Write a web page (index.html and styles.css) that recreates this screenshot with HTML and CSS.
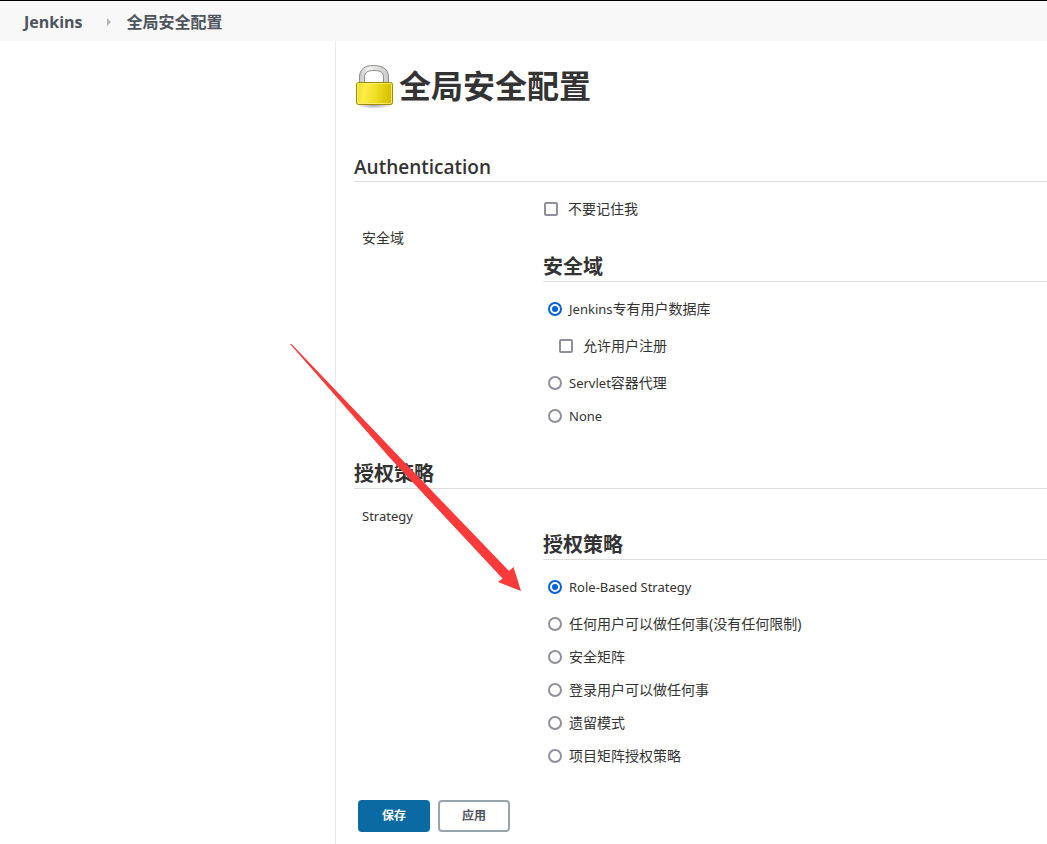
FILE: index.html
```html
<!DOCTYPE html>
<html lang="zh-CN">
<head>
<meta charset="utf-8">
<title>全局安全配置 [Jenkins]</title>
<link rel="stylesheet" href="styles.css">
</head>
<body>
<nav class="breadcrumbs">
  <a href="#">Jenkins</a>
  <svg class="separator" viewBox="0 0 4 8" aria-hidden="true"><path d="M0 0L4 4L0 8Z"/></svg>
  <a href="#">全局安全配置</a>
</nav>
<div class="page">
  <aside class="side-panel"></aside>
  <main class="main-panel">
    <h1 class="page-title">
      <svg class="lock" viewBox="0 0 42 46" aria-hidden="true">
        <defs>
          <linearGradient id="gold" x1="0" y1="0" x2="1" y2="0.1">
            <stop offset="0" stop-color="#eedb20"/><stop offset="0.25" stop-color="#fdec48"/><stop offset="0.6" stop-color="#f0dc20"/><stop offset="1" stop-color="#d6be00"/>
          </linearGradient>
          <linearGradient id="steel" x1="0" y1="0" x2="1" y2="0">
            <stop offset="0" stop-color="#c4c6c2"/><stop offset="0.3" stop-color="#f2f2f0"/><stop offset="1" stop-color="#c9cac7"/>
          </linearGradient>
          <radialGradient id="shade"><stop offset="0" stop-color="#777" stop-opacity="0.7"/><stop offset="1" stop-color="#777" stop-opacity="0"/></radialGradient>
        </defs>
        <ellipse cx="20" cy="42" rx="18" ry="4" fill="url(#shade)"/>
        <path d="M5.500 22V14C5.500 6 11 2.500 19.500 2.500S34.500 6 34.500 14V22H29.500V14C29.500 9.500 26.500 7.500 20 7.500S10.500 9.500 10.500 14V22Z" fill="url(#steel)" stroke="#8b8d88"/>
        <rect x="2.500" y="19.500" width="36" height="22" rx="2" fill="url(#gold)" stroke="#a08a00"/>
        <rect x="3.500" y="20.500" width="34" height="20" rx="1" fill="none" stroke="#fff27a" stroke-opacity="0.8"/>
      </svg>
      全局安全配置
    </h1>
    <form class="config">
      <section>
        <h2 class="heading latin">Authentication</h2>
        <div class="setting remember">
          <label class="choice check"><input type="checkbox">不要记住我</label>
        </div>
        <div class="setting">
          <span class="setting-name">安全域</span>
          <div class="setting-body" role="radiogroup" aria-label="安全域">
            <h3 class="heading">安全域</h3>
            <div class="choices">
              <div class="choice-group">
                <label class="choice"><input type="radio" name="realm" checked><span><span class="latin">Jenkins</span>专有用户数据库</span></label>
                <label class="choice check nested"><input type="checkbox">允许用户注册</label>
              </div>
              <label class="choice"><input type="radio" name="realm"><span><span class="latin">Servlet</span>容器代理</span></label>
              <label class="choice"><input type="radio" name="realm"><span class="latin">None</span></label>
            </div>
          </div>
        </div>
      </section>
      <section>
        <h2 class="heading">授权策略</h2>
        <div class="setting strategy">
          <span class="setting-name latin">Strategy</span>
          <div class="setting-body" role="radiogroup" aria-label="授权策略">
            <h3 class="heading">授权策略</h3>
            <div class="choices">
              <div class="choice-group">
                <label class="choice"><input type="radio" name="strategy" checked><span class="latin">Role-Based Strategy</span></label>
              </div>
              <label class="choice"><input type="radio" name="strategy">任何用户可以做任何事(没有任何限制)</label>
              <label class="choice"><input type="radio" name="strategy">安全矩阵</label>
              <label class="choice"><input type="radio" name="strategy">登录用户可以做任何事</label>
              <label class="choice"><input type="radio" name="strategy">遗留模式</label>
              <label class="choice"><input type="radio" name="strategy">项目矩阵授权策略</label>
            </div>
          </div>
        </div>
      </section>
      <div class="actions">
        <button class="button primary" type="submit">保存</button>
        <button class="button" type="button">应用</button>
      </div>
    </form>
  </main>
</div>
<svg class="arrow" viewBox="0 0 232 248" aria-hidden="true"><path d="M0 0L1.500 0L119 123L219 227L223.500 223L231 247L208 238L212.500 234.500L100 114Z"/></svg>
</body>
</html>
```
FILE: styles.css
```css
* {
  box-sizing: border-box;
}

body {
  position: relative;
  display: flex;
  flex-direction: column;
  min-height: 100vh;
  margin: 0;
  background: #fff;
  color: #333;
  font: 14px/20px "Noto Sans", "Noto Sans CJK SC", sans-serif;
}

/* Noto Sans runs large beside the Chinese glyphs, so Latin labels are a step smaller */
.latin {
  font-size: 13px;
}

.breadcrumbs {
  display: flex;
  align-items: center;
  height: 41px;
  padding: 1px 24px 0;
  border-top: 1px solid #000;
  background: #f8f8f8;
  font-family: "Open Sans", "Noto Sans CJK SC", sans-serif;
  font-size: 16px;
  font-weight: 700;
}

.breadcrumbs a {
  color: #4d545d;
  text-decoration: none;
}

.separator {
  width: 4px;
  height: 8px;
  margin: 0 16px 0 24px;
  fill: #b5b5b5;
}

.page {
  display: flex;
  flex: 1;
}

.side-panel {
  flex: none;
  width: 32%;
}

.main-panel {
  flex: 1;
  padding: 21px 0 12px 18px;
  border-left: 1px solid #eaeaea;
}

.page-title {
  display: flex;
  align-items: center;
  gap: 3px;
  margin: 0 0 40px;
  font-size: 32px;
  line-height: 48px;
}

.lock {
  width: 42px;
  height: 46px;
}

.heading {
  margin: 0;
  padding-top: 3px;
  border-bottom: 1px solid #dcdcdc;
  font-size: 20px;
  font-weight: 700;
  line-height: 28px;
}

.heading.latin {
  font-family: "Open Sans", sans-serif;
  font-size: 19px;
  font-weight: 600;
}

section + section {
  margin-top: 31px;
}

.setting {
  display: grid;
  grid-template-columns: 181px 1fr;
  padding-left: 8px;
}

.remember {
  margin: 17px 0 9px;
}

.remember .choice {
  grid-column: 2;
}

.strategy {
  margin-top: 17px;
}

.setting-body {
  padding-top: 22px;
}

.choices {
  display: flex;
  flex-direction: column;
  gap: 13px;
  padding: 17px 0 0 5px;
}

.choice-group {
  display: flex;
  flex-direction: column;
  gap: 17px;
  margin-bottom: 4px;
}

.choice {
  display: flex;
  align-items: center;
  gap: 7px;
}

.check {
  gap: 10px;
  padding-left: 1px;
}

.nested {
  padding-left: 11px;
}

input {
  appearance: none;
  flex: none;
  width: 14px;
  height: 14px;
  margin: 0;
  border: 2px solid #8f8f9d;
  border-radius: 2px;
  background: #fff;
}

input[type="radio"] {
  border-radius: 50%;
}

input[type="radio"]:checked {
  padding: 2px;
  border-color: #0060df;
  background: #0060df content-box;
}

.actions {
  display: flex;
  gap: 8px;
  margin-top: 34px;
  padding-left: 4px;
}

.button {
  min-width: 72px;
  height: 32px;
  border: 2px solid #98a5ae;
  border-radius: 4px;
  background: #fff;
  color: #4d545d;
  font: inherit;
  font-size: 12px;
  font-weight: 700;
}

.primary {
  border-color: #0b6aa2;
  background: #0b6aa2;
  color: #fff;
}

.arrow {
  position: absolute;
  top: 344px;
  left: 290px;
  width: 232px;
  height: 248px;
  fill: #fc3a3a;
  pointer-events: none;
}
```
